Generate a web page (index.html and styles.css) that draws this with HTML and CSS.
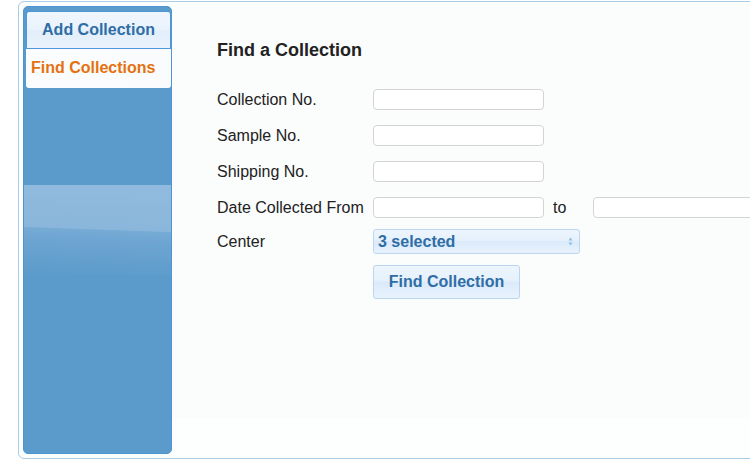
FILE: index.html
```html
<!DOCTYPE html>
<html>
<head>
<meta charset="utf-8">
<title>Find a Collection</title>
<link rel="stylesheet" href="styles.css">
</head>
<body>
<div class="frame">
  <nav class="sidebar">
    <a class="tab tab-add">Add Collection</a>
    <a class="tab tab-find">Find Collections</a>
    <div class="gloss"></div>
  </nav>
  <main class="content">
    <h1 class="title">Find a Collection</h1>
    <form class="form">
      <div class="row"><label class="label">Collection No.</label><input class="field" type="text"></div>
      <div class="row"><label class="label">Sample No.</label><input class="field" type="text"></div>
      <div class="row"><label class="label">Shipping No.</label><input class="field" type="text"></div>
      <div class="row row-date"><label class="label">Date Collected From</label><input class="field" type="text"><span class="to">to</span><input class="field" type="text"></div>
      <div class="row row-center"><label class="label">Center</label>
        <div class="select"><span>3 selected</span>
          <svg class="arrows" width="5" height="9" viewBox="0 0 5 9"><path d="M2.5 0.5 L4.5 3.5 L0.5 3.5 Z M0.5 5.5 L4.5 5.5 L2.5 8.5 Z" fill="#8dbde3"/></svg>
        </div>
      </div>
      <div class="row row-btn"><span class="label"></span><button class="btn" type="button">Find Collection</button></div>
    </form>
  </main>
</div>
</body>
</html>
```

FILE: styles.css
```css
html, body {
  margin: 0;
  padding: 0;
  overflow: hidden;
  background: #ffffff;
}
body {
  font-family: "Liberation Sans", Arial, sans-serif;
  font-size: 16px;
  color: #222;
}
.frame {
  margin: 1px 0 0 18px;
  width: 820px;
  height: 458px;
  box-sizing: border-box;
  border: 1px solid #a9cde7;
  border-radius: 6px;
  padding: 4px;
  display: flex;
  background: #fdfefe;
}
.sidebar {
  width: 149px;
  height: 448px;
  box-sizing: border-box;
  background: #5b9bcb;
  border: 1px solid #4f95d2;
  border-radius: 5px;
  padding: 4px 0 0 2px;
  display: flex;
  flex-direction: column;
  flex-shrink: 0;
}
.tab {
  display: block;
  box-sizing: border-box;
  font-weight: bold;
  font-size: 16px;
  text-decoration: none;
}
.tab-add {
  height: 38px;
  line-height: 36px;
  text-align: center;
  color: #2f6da6;
  border: 1px solid #4c98da;
  border-radius: 3px 3px 0 0;
  background: linear-gradient(#f0f6fd 0%, #e9f2fc 50%, #e2eefa 52%, #eaf3fc 100%);
}
.tab-find {
  height: 39px;
  line-height: 38px;
  padding-left: 5px;
  color: #e4720f;
  background: linear-gradient(90deg, #fbfcfe 0%, #f9fbfd 100%);
  border-radius: 0 0 3px 3px;
}
.gloss {
  margin: 97px 0 0 -2px;
  height: 90px;
  background: linear-gradient(182deg, #91bbde 0%, #8ab6db 49%, #76abd5 50%, #6ea5d2 60%, #5b9bcb 100%);
}
.content {
  flex: 1;
  height: 412px;
  background: #fbfcfc;
  padding: 33px 0 0 45px;
  box-sizing: border-box;
}
.title {
  margin: 0 0 28px;
  font-size: 18px;
  line-height: 22px;
  font-weight: bold;
  color: #222;
}
.form {
  margin: 0;
}
.row {
  display: flex;
  align-items: center;
  margin-bottom: 15px;
}
.row-date { margin-bottom: 11px; }
.row-center { margin-bottom: 11px; }
.label {
  width: 156px;
  flex-shrink: 0;
  font-size: 16px;
  color: #222;
}
.field {
  width: 171px;
  height: 21px;
  box-sizing: border-box;
  border: 1px solid #d2d4d6;
  border-radius: 4px;
  background: #ffffff;
  padding: 0 4px;
  margin: 0;
  font: inherit;
  flex-shrink: 0;
}
.to {
  margin: 0 27px 0 9px;
  font-size: 16px;
}
.select {
  width: 207px;
  height: 25px;
  box-sizing: border-box;
  border: 1px solid #bdd7ee;
  border-radius: 3px;
  background: linear-gradient(#edf5fd 0%, #e6f1fc 45%, #dbeafa 50%, #e7f2fd 100%);
  display: flex;
  align-items: center;
  justify-content: space-between;
  padding: 0 6px 0 4px;
  font-weight: bold;
  color: #2f6da6;
}
.arrows { display: block; }
.btn {
  width: 147px;
  height: 34px;
  box-sizing: border-box;
  border: 1px solid #bad5ed;
  border-radius: 3px;
  background: linear-gradient(#edf5fd 0%, #e6f1fc 45%, #dbeafa 52%, #e8f3fd 100%);
  font-family: "Liberation Sans", Arial, sans-serif;
  font-size: 16px;
  font-weight: bold;
  color: #2f6da6;
  padding: 0;
  margin: 0;
}
```
